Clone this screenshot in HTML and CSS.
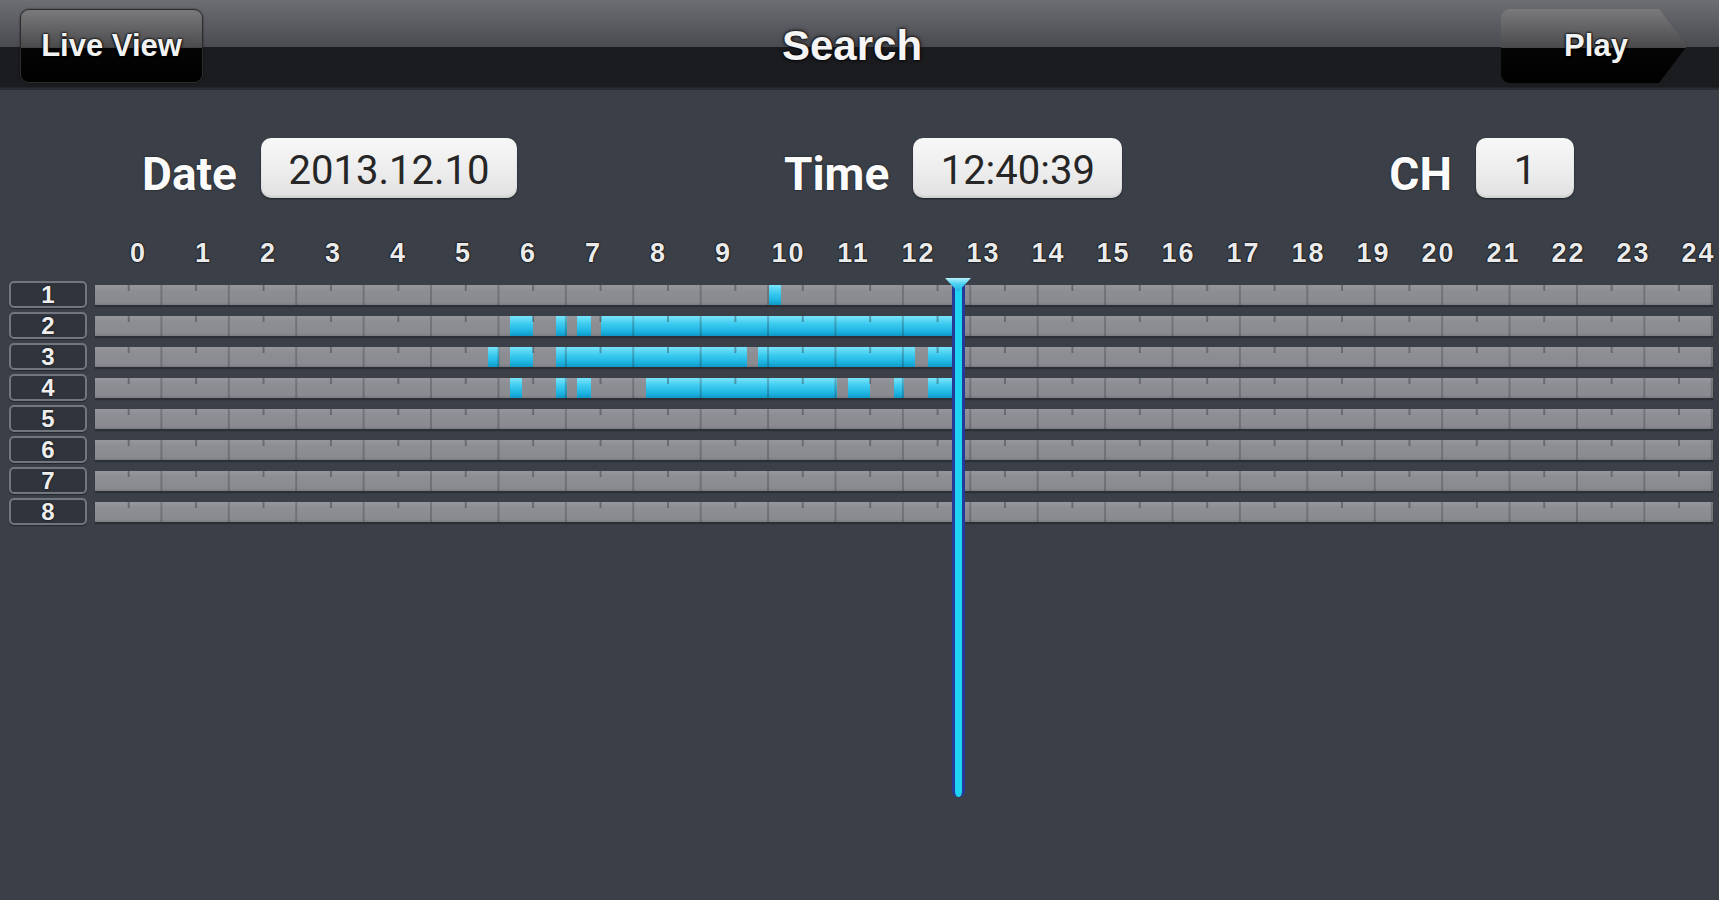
FILE: index.html
```html
<!DOCTYPE html>
<html lang="en">
<head>
<meta charset="utf-8">
<title>Search</title>
<link rel="stylesheet" href="styles.css">
</head>
<body>
<header class="topbar">
  <div class="btn btn-back">Live View</div>
  <h1 class="title">Search</h1>
  <div class="btn btn-play">Play</div>
</header>
<main class="content">
  <div class="controls">
    <div class="field"><span class="field-label">Date</span><span class="field-box box-date">2013.12.10</span></div>
    <div class="field"><span class="field-label">Time</span><span class="field-box box-time">12:40:39</span></div>
    <div class="field"><span class="field-label">CH</span><span class="field-box box-ch">1</span></div>
  </div>
  <div class="hours">
    <span>0</span><span>1</span><span>2</span><span>3</span><span>4</span><span>5</span><span>6</span><span>7</span><span>8</span><span>9</span><span>10</span><span>11</span><span>12</span><span>13</span><span>14</span><span>15</span><span>16</span><span>17</span><span>18</span><span>19</span><span>20</span><span>21</span><span>22</span><span>23</span><span>24</span>
  </div>
  <div class="timeline">
    <div class="row"><div class="ch">1</div><div class="bar">
      <i class="seg" style="left:41.67%;width:0.74%"></i>
    </div></div>
    <div class="row"><div class="ch">2</div><div class="bar">
      <i class="seg" style="left:25.65%;width:1.45%"></i>
      <i class="seg" style="left:28.49%;width:0.68%"></i>
      <i class="seg" style="left:29.79%;width:0.87%"></i>
      <i class="seg" style="left:31.27%;width:21.67%"></i>
    </div></div>
    <div class="row"><div class="ch">3</div><div class="bar">
      <i class="seg" style="left:24.29%;width:0.68%"></i>
      <i class="seg" style="left:25.65%;width:1.45%"></i>
      <i class="seg" style="left:28.49%;width:11.83%"></i>
      <i class="seg" style="left:41.0%;width:9.68%"></i>
      <i class="seg" style="left:51.48%;width:1.46%"></i>
    </div></div>
    <div class="row"><div class="ch">4</div><div class="bar">
      <i class="seg" style="left:25.65%;width:0.74%"></i>
      <i class="seg" style="left:28.49%;width:0.68%"></i>
      <i class="seg" style="left:29.79%;width:0.87%"></i>
      <i class="seg" style="left:34.05%;width:11.81%"></i>
      <i class="seg" style="left:46.54%;width:1.36%"></i>
      <i class="seg" style="left:49.38%;width:0.62%"></i>
      <i class="seg" style="left:51.48%;width:1.46%"></i>
    </div></div>
    <div class="row"><div class="ch">5</div><div class="bar"></div></div>
    <div class="row"><div class="ch">6</div><div class="bar"></div></div>
    <div class="row"><div class="ch">7</div><div class="bar"></div></div>
    <div class="row"><div class="ch">8</div><div class="bar"></div></div>
    <div class="marker"><div class="marker-line"></div><div class="marker-head"></div></div>
  </div>
</main>
</body>
</html>
```

FILE: styles.css
```css
html, body {
  margin: 0;
  padding: 0;
}
body {
  width: 1719px;
  height: 900px;
  overflow: hidden;
  background: #3a3f48;
  font-family: "Liberation Sans", Arial, sans-serif;
}

/* ---------- top bar ---------- */
.topbar {
  height: 90px;
  box-sizing: border-box;
  padding: 2px 32px 0 20px;
  display: flex;
  align-items: center;
  background: linear-gradient(to bottom, #6d6e73 0, #58595e 28px, #4a4b50 47px, #1b1c20 47px, #1b1c20 87px, #2a2c31 88px, #2a2c31 90px);
}
.btn {
  height: 74px;
  box-sizing: border-box;
  display: flex;
  align-items: center;
  justify-content: center;
  font-weight: bold;
  font-size: 31px;
  color: #f2f2f2;
  text-shadow: 0 0 3px #000, 0 0 2px #000, 0 1px 2px #000;
  background: linear-gradient(to bottom, #7a7a7c 0, #5a5a5c 35%, #4a4a4c 52%, #050505 53%, #000 100%);
}
.btn-back {
  width: 183px;
  border-radius: 9px;
  border: 1px solid #2c2c2e;
  box-shadow: 0 0 2px rgba(0, 0, 0, 0.6);
}
.btn-play {
  width: 186px;
  border-radius: 9px 0 0 9px;
  clip-path: polygon(0 0, 158px 0, 186px 50%, 158px 100%, 0 100%);
  padding-left: 4px;
}
.title {
  flex: 1;
  margin: 0;
  text-align: center;
  font-weight: bold;
  font-size: 42px;
  color: #f5f5f5;
  text-shadow: 0 0 4px #000, 0 0 2px #000;
}

/* ---------- controls ---------- */
.content {
  padding-top: 48px;
}
.controls {
  display: flex;
  align-items: center;
  gap: 267px;
  padding-left: 142px;
  height: 60px;
}
.field {
  display: flex;
  align-items: center;
  gap: 24px;
}
.field-label {
  margin-top: 12px;
  font-family: Roboto, "Liberation Sans", sans-serif;
  font-weight: bold;
  font-size: 46px;
  line-height: 1;
  color: #fbfbfb;
  text-shadow: 0 0 2px rgba(0, 0, 0, 0.7);
}
.field-box {
  display: block;
  height: 60px;
  padding-top: 6px;
  line-height: 54px;
  box-sizing: border-box;
  border-radius: 10px;
  background: linear-gradient(to bottom, #f7f7f7, #ececec 60%, #e0e0e0);
  box-shadow: 0 1px 2px rgba(0, 0, 0, 0.5), inset 0 -2px 2px rgba(0, 0, 0, 0.08);
  font-family: Roboto, "Liberation Sans", sans-serif;
  font-size: 40px;
  color: #262626;
  text-align: center;
}
.box-date { width: 256px; }
.box-time { width: 209px; }
.box-ch { width: 98px; }

/* ---------- hour scale ---------- */
.hours {
  display: flex;
  padding-left: 105px;
  margin-top: 40px;
  height: 30px;
  line-height: 30px;
}
.hours span {
  flex: 0 0 65px;
  text-align: center;
  font-weight: bold;
  font-size: 27px;
  letter-spacing: 2px;
  text-indent: 2px;
  color: #ebebeb;
  text-shadow: 0 0 2px #000, 0 0 1px #000, 0 0 1px #000;
}

/* ---------- timeline ---------- */
.timeline {
  position: relative;
  margin-top: 13px;
  padding-left: 9px;
  display: flex;
  flex-direction: column;
  gap: 4px;
}
.row {
  display: flex;
  align-items: center;
  gap: 8px;
  height: 27px;
}
.ch {
  width: 78px;
  height: 27px;
  box-sizing: border-box;
  border: 2px solid #72767e;
  border-radius: 5px;
  background: #30343c;
  box-shadow: 0 1px 1px rgba(0, 0, 0, 0.4);
  color: #eeeeee;
  font-weight: bold;
  font-size: 24px;
  line-height: 23px;
  text-align: center;
  text-shadow: 0 0 2px #000;
}
.bar {
  position: relative;
  width: 1618px;
  height: 20px;
  background: linear-gradient(to bottom, #96979c, #8d8e93 30%, #8a8b90 85%, #7b7c81);
  box-shadow: 0 2px 1px rgba(0, 0, 0, 0.25);
}
.bar::after {
  content: "";
  position: absolute;
  inset: 0;
  background-image:
    linear-gradient(to right, transparent calc(100% - 2px), rgba(40, 42, 50, 0.28) calc(100% - 2px)),
    linear-gradient(to right, transparent calc(50% - 1px), rgba(30, 32, 40, 0.35) calc(50% - 1px), rgba(30, 32, 40, 0.35) calc(50% + 1px), transparent calc(50% + 1px));
  background-size: calc(100% / 24) 100%, calc(100% / 24) 6px;
  background-repeat: repeat-x, repeat-x;
  background-position: 0 0, 0 0;
}
.seg {
  position: absolute;
  top: 0;
  bottom: 0;
  background: linear-gradient(to bottom, #7ae4fa, #3ccbf0 40%, #1eb5e2 75%, #1198c6);
}

/* ---------- playhead ---------- */
.marker {
  position: absolute;
  left: 945px;
  top: -3px;
  width: 26px;
  height: 519px;
}
.marker-line {
  position: absolute;
  left: 7px;
  top: 6px;
  bottom: 0;
  width: 7px;
  background: #1fd4f3;
  border-left: 3px solid rgba(38, 40, 140, 0.9);
  border-right: 3px solid rgba(38, 40, 140, 0.9);
  border-radius: 0 0 6px 6px;
}
.marker-head {
  position: absolute;
  left: 0;
  top: 0;
  width: 26px;
  height: 14px;
  background: linear-gradient(to bottom, #b8f2fc, #4fd2f2 40%, #1ab4e0);
  clip-path: polygon(0 0, 100% 0, 50% 100%);
}
```
